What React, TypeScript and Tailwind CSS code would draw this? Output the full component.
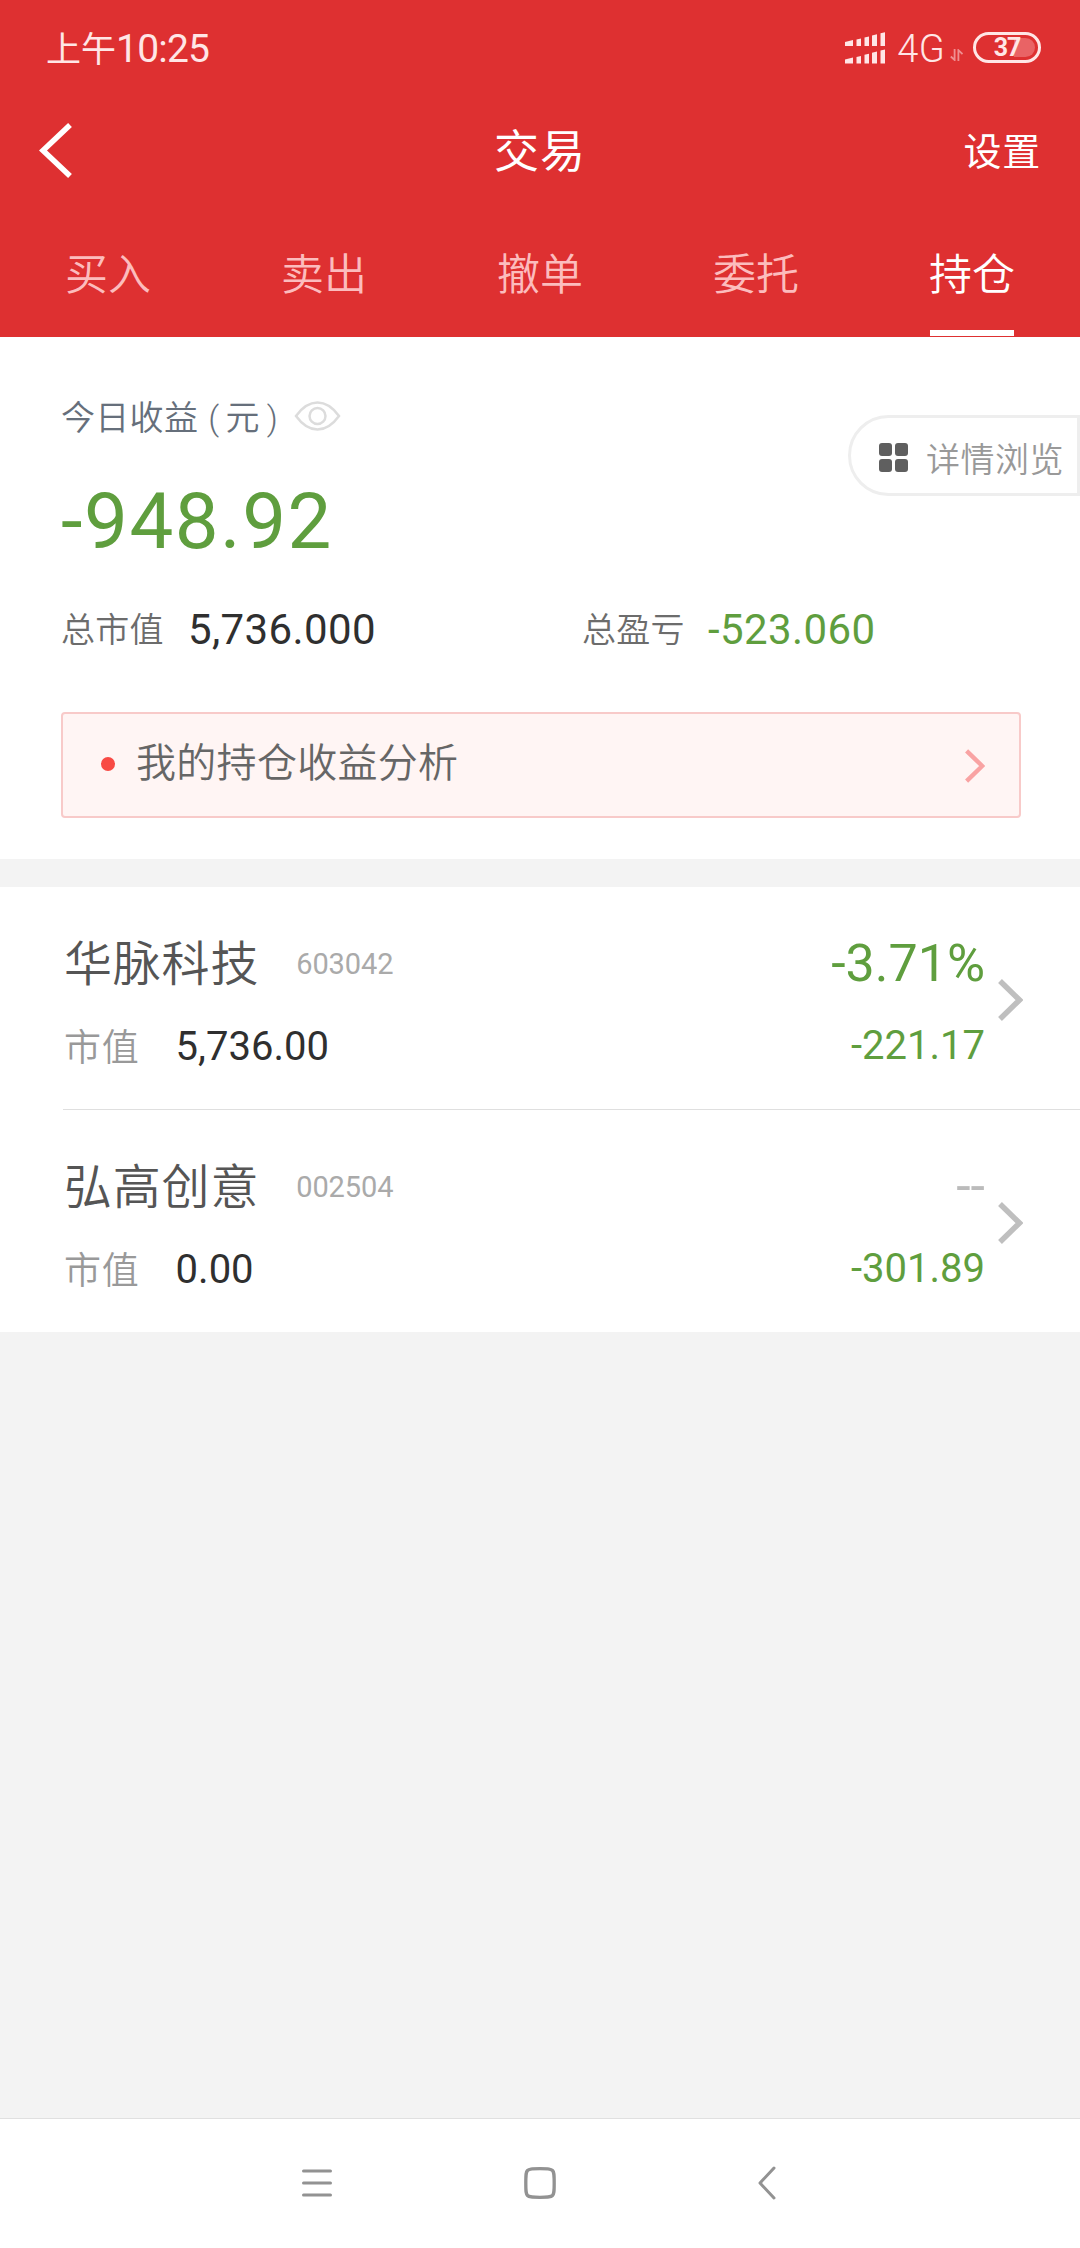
import { useState } from 'react';

interface Holding {
  name: string;
  code: string;
  marketValue: string;
  percent: string | null;
  profit: string;
}

const tabs = ['买入', '卖出', '撤单', '委托', '持仓'];

const holdings: Holding[] = [
  { name: '华脉科技', code: '603042', marketValue: '5,736.00', percent: '-3.71%', profit: '-221.17' },
  { name: '弘高创意', code: '002504', marketValue: '0.00', percent: null, profit: '-301.89' },
];

function SignalIcon() {
  return (
    <svg className="w-10 h-8 shrink-0" viewBox="0 0 40 32" fill="#ffe6e6">
      <path d="M0 10l8-2v6H0zM11.5 7.5l4.5-1v7.5h-4.5zM19.5 5.5l4.5-1v9.5h-4.5zM27 3.5l5-1.2v11.7h-5zM35.5 1.2l4.5-1v13.8h-4.5z" />
      <path d="M0 27.5l8-2v6H0zM11.5 25l4.5-1v7.500h-4.500zM19.500 22.800l4.500-1v9.700h-4.500zM27 20.700l5-1.200v12h-5zM35.500 18.500l4.500-1v14h-4.500z" />
    </svg>
  );
}

function DataIcon() {
  return (
    <svg className="w-[13px] h-3 shrink-0" viewBox="0 0 13 12" fill="none" stroke="#ef8f91" strokeWidth="1.8">
      <path d="M4.6 0v11L0.8 7.5M8.4 12V1.2L12.5 5" />
    </svg>
  );
}

function StatusBar() {
  return (
    <div className="flex items-center h-[95px] pl-[46px] pr-[39px] text-[#ffe6e6]">
      <div className="flex items-baseline pt-1 leading-none">
        <span className="text-[35px]">上午</span>
        <span className="text-[39px] tracking-[-0.8px]">10:25</span>
      </div>
      <div className="flex items-center ml-auto">
        <SignalIcon />
        <span className="ml-3 pt-0.5 text-[38px] font-[350] leading-none tracking-[0.3px]">4G</span>
        <span className="ml-[5px] mt-3.5"><DataIcon /></span>
        <div className="relative flex items-center justify-center ml-2.5 w-[68px] h-[31px] border-3 border-[#ffe6e6] rounded-full">
          <div className="absolute right-[3px] top-[3px] w-[21px] h-[19px] bg-[#e96365] rounded-r-full" />
          <span className="relative text-[25px] font-bold leading-none tracking-[-1px]">37</span>
        </div>
      </div>
    </div>
  );
}

function ArrowRight({ className, width }: { className: string; width: number }) {
  return (
    <svg className={className} viewBox="0 0 25 42" fill="none" stroke="currentColor" strokeWidth={width}>
      <path d="M2 2l19.5 19L2 40" />
    </svg>
  );
}

function HoldingRow({ item }: { item: Holding }) {
  return (
    <div className="flex items-center h-[222px] pt-[3px] pl-16 pr-[57px]">
      <div className="flex-1 pt-3">
        <div className="flex items-center h-[70px]">
          <span className="pt-px text-[48px] font-[350] tracking-[0.8px] leading-none text-[#555]">{item.name}</span>
          <span className="ml-[37px] text-[29px] leading-none tracking-[-0.1px] text-[#aaa]">{item.code}</span>
        </div>
        <div className="flex items-center mt-3 h-[70px]">
          <span className="pt-[3px] text-[37px] font-[350] tracking-[0.8px] leading-none text-[#999]">市值</span>
          <span className="ml-9 pt-px text-[40px] leading-none text-[#2f2f2f]">{item.marketValue}</span>
        </div>
      </div>
      <div className="flex flex-col items-end pt-2.5">
        <div className="flex items-center h-[70px]">
          <span className={`text-[52px] leading-none ${item.percent ? 'text-[#5f9e3e]' : 'text-[#bbb]'}`}>
            {item.percent ?? '--'}
          </span>
        </div>
        <div className="flex items-center mt-3 h-[70px]">
          <span className="text-[40px] leading-none text-[#5f9e3e]">{item.profit}</span>
        </div>
      </div>
      <ArrowRight className="ml-[13px] w-[25px] h-[42px] text-[#bfbfbf]" width={5.5} />
    </div>
  );
}

export default function App() {
  const [active, setActive] = useState(4);

  return (
    <div className="flex flex-col w-[1080px] h-[2248px] bg-[#f3f3f3] overflow-hidden font-[Roboto,'Noto_Sans_CJK_SC',sans-serif]">
      <header className="h-[337px] bg-[#de3031] text-white">
        <StatusBar />

        <div className="grid grid-cols-3 items-center h-[110px] px-[39px]">
          <button aria-label="返回">
            <svg className="w-[33px] h-[55px]" viewBox="0 0 33 55" fill="none" stroke="currentColor" strokeWidth="5.5">
              <path d="M31 2L4 27.5 31 53" />
            </svg>
          </button>
          <h1 className="pt-[5px] text-center text-[45px] leading-none tracking-[1px]">交易</h1>
          <button className="justify-self-end pt-[3px] text-[38px] leading-none tracking-[0.8px]">设置</button>
        </div>

        {/* 交易标签 */}
        <nav className="grid grid-cols-5 h-[132px]">
          {tabs.map((tab, i) => (
            <button
              key={tab}
              onClick={() => setActive(i)}
              className={`flex flex-col items-center pt-[49px] text-[43px] font-[350] leading-none ${i === active ? 'text-white' : 'text-[#fcbcbd]'}`}
            >
              {tab}
              {i === active && <span className="mt-auto mb-px w-[84px] h-1.5 bg-white" />}
            </button>
          ))}
        </nav>
      </header>

      {/* 今日收益 */}
      <section className="relative h-[522px] pt-[61px] px-[61px] bg-white">
        <div className="flex items-center h-9">
          <span className="pt-[3px] text-[34px] font-[350] leading-none tracking-[0.3px] text-[#666f7b]">
            今日收益<span className="ml-2.5 mr-1.5">(</span>元<span className="ml-[7px]">)</span>
          </span>
          <svg className="ml-4 w-[47px] h-[30px]" viewBox="0 0 46 30" fill="none" stroke="#dcdcdc" strokeWidth="2.5">
            <path d="M1.5 15C8 6 15 1.5 23 1.5S38 6 44.5 15C38 24 31 28.5 23 28.5S8 24 1.5 15z" />
            <circle cx="23" cy="15" r="8" />
          </svg>
        </div>
        <div className="mt-12 text-[78px] leading-[80px] tracking-[1.5px] text-[#5f9e3e]">-948.92</div>
        <div className="flex items-center mt-12 h-10 leading-none">
          <div className="flex items-center w-[521px]">
            <span className="text-[34px] font-[350] tracking-[0.3px] text-[#6c6c6c]">总市值</span>
            <span className="ml-6 text-[42px] tracking-[0.4px] text-[#2f2f2f]">5,736.000</span>
          </div>
          <div className="flex items-center">
            <span className="text-[34px] font-[350] tracking-[0.3px] text-[#6c6c6c]">总盈亏</span>
            <span className="ml-[23px] text-[42px] tracking-[0.4px] text-[#5f9e3e]">-523.060</span>
          </div>
        </div>
        <div className="flex items-center mt-[62px] w-[960px] h-[106px] pl-[38px] pr-[34px] bg-[#fff5f4] border-2 border-[#f8cac9] rounded">
          <span className="-mt-0.5 w-3.5 h-3.5 bg-[#f84a44] rounded-full" />
          <span className="-mt-0.5 ml-[21px] text-[40px] font-[350] tracking-[0.3px] leading-none text-[#666]">我的持仓收益分析</span>
          <ArrowRight className="ml-auto mt-0.5 w-5 h-[34px] text-[#f9a3a3]" width={5.5} />
        </div>

        {/* 悬浮按钮 */}
        <button className="absolute right-0 top-[78px] flex items-center w-[232px] h-[81px] pl-7 pt-1 bg-white border-3 border-[#eee] rounded-l-full">
          <span className="grid grid-cols-2 gap-[3px] w-[29px] h-[29px]">
            <i className="bg-[#5f5f5f] rounded-[3px]" />
            <i className="bg-[#5f5f5f] rounded-[3px]" />
            <i className="bg-[#5f5f5f] rounded-[3px]" />
            <i className="bg-[#5f5f5f] rounded-[3px]" />
          </span>
          <span className="ml-[18px] pt-[5px] text-[34px] font-[350] tracking-[0.5px] leading-none whitespace-nowrap text-[#999]">详情浏览</span>
        </button>
      </section>

      <section className="mt-7 bg-white">
        <HoldingRow item={holdings[0]} />
        <div className="ml-[63px] h-px bg-[#dfdfdf]" />
        <HoldingRow item={holdings[1]} />
      </section>

      {/* 系统导航栏 */}
      <footer className="flex items-center mt-auto h-[130px] pl-[302px] pb-0.5 bg-white border-t border-[#e0e0e0] text-[#929292]">
        <svg className="w-[30px] h-8" viewBox="0 0 30 32" fill="none" stroke="currentColor" strokeWidth="3" strokeLinecap="round">
          <path d="M1.5 4h27M1.5 16h27M1.5 28h27" />
        </svg>
        <svg className="ml-48 w-8 h-8" viewBox="0 0 32 32" fill="none" stroke="currentColor" strokeWidth="3.3">
          <path d="M16 1.7c9 0 11 .3 12.5 1.8S30.2 7 30.2 16s-.2 11-1.7 12.5S25 30.3 16 30.3s-11-.3-12.5-1.8S1.8 25 1.8 16s.2-11 1.7-12.5S7 1.7 16 1.7z" />
        </svg>
        <svg className="ml-[202px] w-[18px] h-[34px]" viewBox="0 0 18 34" fill="none" stroke="currentColor" strokeWidth="3" strokeLinecap="round" strokeLinejoin="round">
          <path d="M16 2L2 17l14 15" />
        </svg>
      </footer>
    </div>
  );
}
